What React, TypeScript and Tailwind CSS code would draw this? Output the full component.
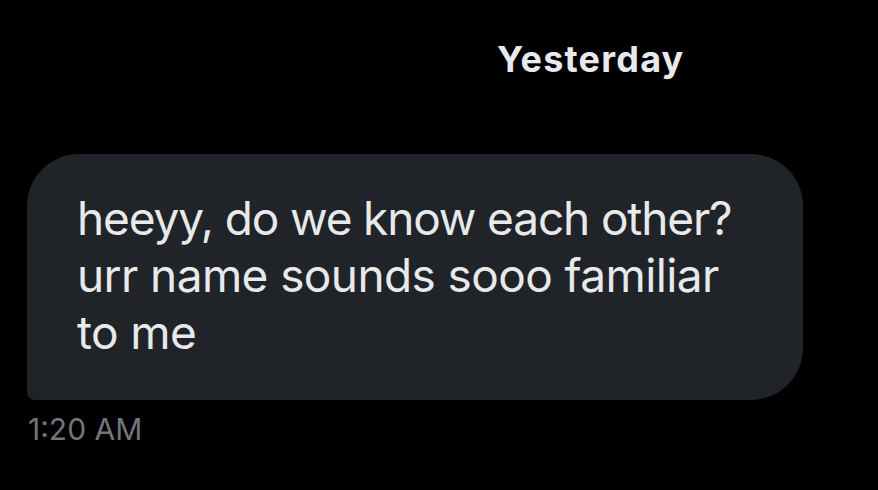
import React from "react";

export default function App() {
  return (
    <div className="w-[878px] h-[490px] bg-black overflow-hidden font-['Inter','Noto_Sans',sans-serif]">
      <div className="pt-[37px] pl-[497px] text-[36px] leading-[44px] font-bold tracking-[1.2px] text-[#e7e9ea] whitespace-nowrap">
        Yesterday
      </div>
      <div className="mt-[73px] ml-[27px] w-[776px] h-[246px] bg-[#202327] rounded-[52px] rounded-bl-[8px] pl-[50px] pt-[36px] text-[46px] leading-[57px] text-[#e7e9ea] whitespace-nowrap">
        <div className="tracking-[-1.15px]">heeyy, do we know each other?</div>
        <div className="tracking-[-0.6px]">urr name sounds sooo familiar</div>
        <div className="tracking-[-0.6px]">to me</div>
      </div>
      <div className="mt-[11px] ml-[28px] text-[30px] leading-[36px] text-[#71767b] whitespace-nowrap">
        1:20 AM
      </div>
    </div>
  );
}
